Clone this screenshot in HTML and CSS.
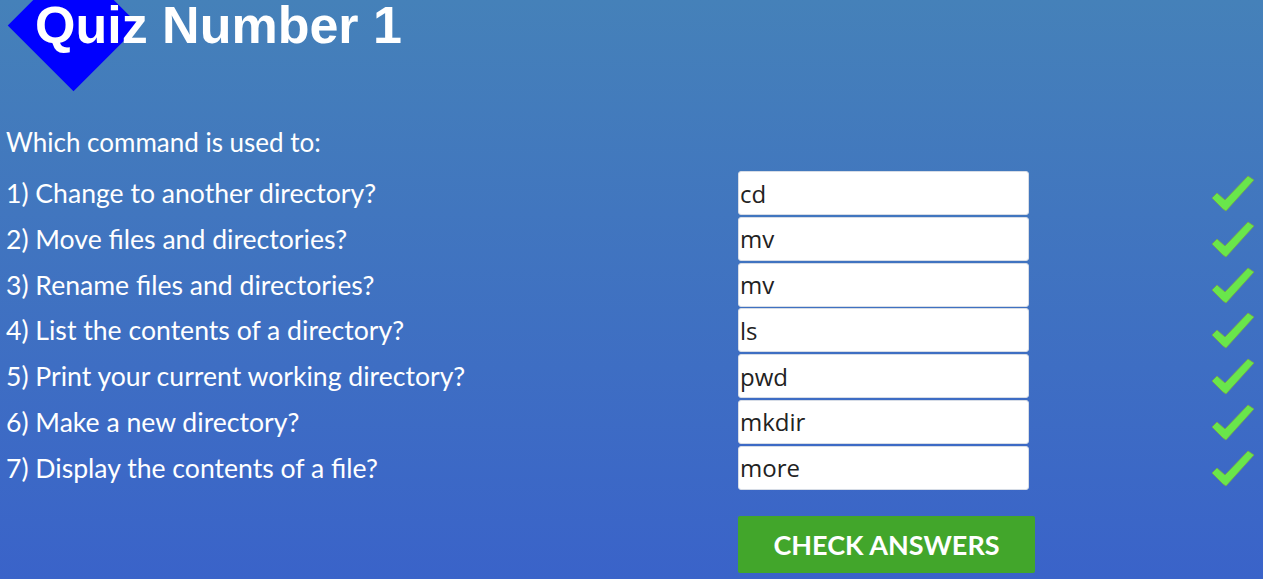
FILE: index.html
```html
<!DOCTYPE html>
<html>
<head>
<meta charset="utf-8">
<link rel="stylesheet" href="styles.css">
</head>
<body>
<header class="head">
  <div class="diamond"></div>
  <h1 class="title">Quiz Number 1</h1>
</header>
<p class="intro">Which command is used to:</p>
<div class="quiz">
  <label class="q">1) Change to another directory?</label>
  <input class="answer" type="text" value="cd">
  <span class="tick"><svg viewBox="0 0 44 40" width="44" height="40"><path d="M1 25 L6 20 L14 27 L37 3 L43 7 L15 38 L12 36 Z"/></svg></span>

  <label class="q">2) Move files and directories?</label>
  <input class="answer" type="text" value="mv">
  <span class="tick"><svg viewBox="0 0 44 40" width="44" height="40"><path d="M1 25 L6 20 L14 27 L37 3 L43 7 L15 38 L12 36 Z"/></svg></span>

  <label class="q">3) Rename files and directories?</label>
  <input class="answer" type="text" value="mv">
  <span class="tick"><svg viewBox="0 0 44 40" width="44" height="40"><path d="M1 25 L6 20 L14 27 L37 3 L43 7 L15 38 L12 36 Z"/></svg></span>

  <label class="q">4) List the contents of a directory?</label>
  <input class="answer" type="text" value="ls">
  <span class="tick"><svg viewBox="0 0 44 40" width="44" height="40"><path d="M1 25 L6 20 L14 27 L37 3 L43 7 L15 38 L12 36 Z"/></svg></span>

  <label class="q">5) Print your current working directory?</label>
  <input class="answer" type="text" value="pwd">
  <span class="tick"><svg viewBox="0 0 44 40" width="44" height="40"><path d="M1 25 L6 20 L14 27 L37 3 L43 7 L15 38 L12 36 Z"/></svg></span>

  <label class="q">6) Make a new directory?</label>
  <input class="answer" type="text" value="mkdir">
  <span class="tick"><svg viewBox="0 0 44 40" width="44" height="40"><path d="M1 25 L6 20 L14 27 L37 3 L43 7 L15 38 L12 36 Z"/></svg></span>

  <label class="q">7) Display the contents of a file?</label>
  <input class="answer" type="text" value="more">
  <span class="tick"><svg viewBox="0 0 44 40" width="44" height="40"><path d="M1 25 L6 20 L14 27 L37 3 L43 7 L15 38 L12 36 Z"/></svg></span>

  <span class="spacer"></span>
  <button class="check" type="button">CHECK ANSWERS</button>
</div>
</body>
</html>
```

FILE: styles.css
```css
html {
  height: 100%;
}
body {
  margin: 0;
  padding: 0 8px 0 6px;
  min-height: 100%;
  box-sizing: border-box;
  background: linear-gradient(to bottom, #4581b9 0%, #3a63c9 100%);
  font-family: Lato, "Liberation Sans", sans-serif;
  color: #fff;
  overflow: hidden;
}
.head {
  position: relative;
  height: 60px;
}
.diamond {
  position: absolute;
  left: 21px;
  top: -21px;
  width: 93px;
  height: 93px;
  background: #0000ff;
  transform: rotate(45deg);
}
.title {
  position: relative;
  margin: 0;
  padding-left: 29px;
  font-family: "Liberation Sans", Arial, sans-serif;
  font-weight: bold;
  font-size: 52px;
  line-height: 50px;
  color: #fff;
}
.intro {
  margin: 67px 0 0;
  font-size: 26px;
  line-height: 30px;
}
.quiz {
  display: grid;
  grid-template-columns: 732px 291px 1fr;
  grid-auto-rows: 44px;
  row-gap: 1.8px;
  margin-top: 14px;
  align-items: center;
}
.q {
  font-size: 26.6px;
}
.answer {
  box-sizing: border-box;
  width: 291px;
  height: 44px;
  margin: 0;
  padding: 0 1px;
  border: 1px solid #d6dce6;
  border-radius: 3px;
  background: #fff;
  font-family: "Open Sans", sans-serif;
  font-size: 24px;
  color: #222;
  outline: none;
}
.tick {
  justify-self: end;
  display: flex;
}
.tick svg {
  display: block;
}
.tick path {
  fill: #69e64b;
  stroke: #79a54a;
  stroke-width: 0.8;
  stroke-linejoin: round;
}
.spacer {
  grid-column: 1;
}
.check {
  grid-column: 2 / span 2;
  justify-self: start;
  align-self: start;
  margin-top: 24px;
  width: 297px;
  height: 57px;
  border: 0;
  border-radius: 2px;
  background: #42a62b;
  color: #fff;
  font-family: Lato, sans-serif;
  font-weight: bold;
  font-size: 27px;
  padding: 0;
}
```
